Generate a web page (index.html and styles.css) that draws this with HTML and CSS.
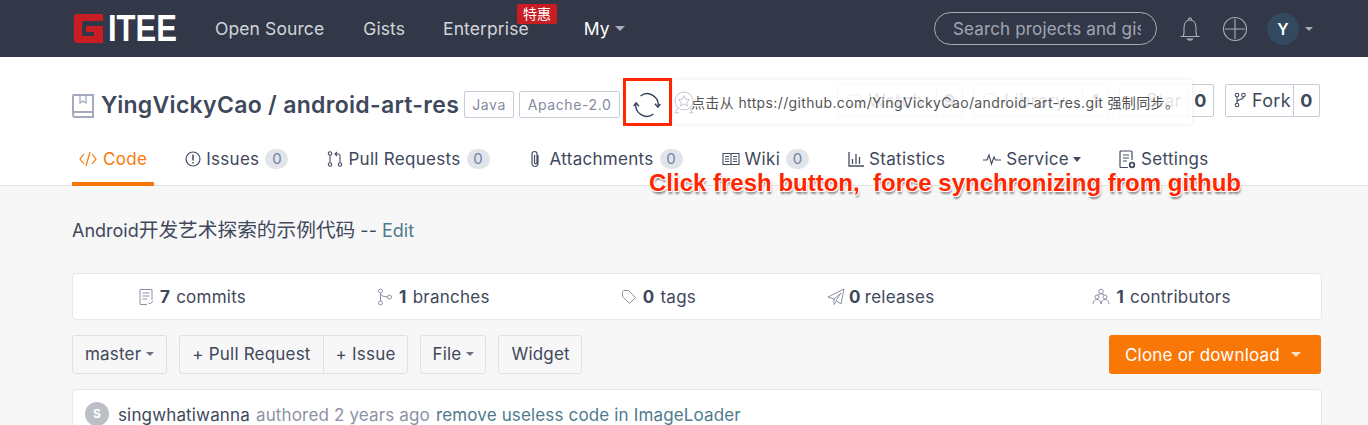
FILE: index.html
```html
<!DOCTYPE html>
<html lang="en">
<head>
<meta charset="utf-8">
<title>YingVickyCao / android-art-res</title>
<link rel="stylesheet" href="styles.css">
</head>
<body>
<header class="topbar">
  <a class="logo">
    <svg class="logo-g" viewBox="0 0 29 29" width="29" height="29"><path d="M3 0H29V7H10Q8 7 8 9V20Q8 22 10 22H20V18H12V12H29V29H3Q0 29 0 26V3Q0 0 3 0Z" fill="#c71d23"/></svg>
    <span class="logo-text">ITEE</span>
  </a>
  <nav class="mainnav">
    <a class="nav-open">Open Source</a>
    <a class="nav-gists">Gists</a>
    <a class="nav-ent">Enterprise<span class="hot">特惠</span></a>
    <a class="nav-my">My<i class="caret caret-grey"></i></a>
  </nav>
  <div class="top-right">
    <div class="search"><span class="search-text">Search projects and gis</span></div>
    <svg class="bell" viewBox="0 0 20 26" width="20" height="26" fill="none" stroke="#a9aebb" stroke-width="1.100"><path d="M0.500 20.500H19.500M3 20.500C4.500 18 4 14 4 11.500C4 7 6.500 4 10 4C13.500 4 16 7 16 11.500C16 14 15.500 18 17 20.500M8.500 4C8.500 1 11.500 1 11.500 4"/><path d="M7.500 23H12.500Q10 25.500 7.500 23Z"/></svg>
    <svg class="plus" viewBox="0 0 26 26" width="26" height="26" fill="none" stroke="#a9aebb" stroke-width="1.100"><circle cx="13" cy="13" r="11.500"/><path d="M13 3V23M3 13H23"/></svg>
    <span class="me">Y</span>
    <i class="caret caret-grey caret-small"></i>
  </div>
</header>

<section class="repo-head">
  <div class="title-row">
    <svg class="book" viewBox="0 0 22 24" width="22" height="24" fill="none" stroke="#a4a9bf" stroke-width="2"><path d="M1 20V2Q1 1 2 1H21V23H3Q1 23 1 20ZM1 20Q1 18 3 18H21"/><path d="M8 1V9L11 7L14 9V1" stroke-width="1.300"/></svg>
    <h1 class="repo-name">YingVickyCao / android-art-res</h1>
    <span class="tag tag-java">Java</span>
    <span class="tag tag-lic">Apache-2.0</span>
    <svg class="sync" viewBox="0 0 28 28" width="28" height="28" fill="none" stroke="#38405a" stroke-width="1.400"><path d="M7.500 5A11 11 0 0 1 25 15.500"/><path d="M20.500 23A11 11 0 0 1 3 12.500"/><path d="M22 12.800L24.900 16.200L27.300 13"/><path d="M0.700 15L3.100 11.800L6 15.200"/></svg>
    <div class="actions">
      <div class="act act-watch"><span class="act-l"><svg viewBox="0 0 16 16" width="16" height="16" fill="none" stroke="#8c92a4"><rect x="1" y="3" width="14" height="10" rx="1"/></svg>Watch</span><b class="act-n">9</b></div>
      <div class="act act-star"><span class="act-l"><svg viewBox="0 0 16 16" width="16" height="16" fill="none" stroke="#8c92a4"><circle cx="8" cy="8" r="6.500"/></svg>Library</span><b class="act-n">1</b></div>
      <div class="act act-unstar"><span class="act-l">Star</span><b class="act-n">0</b></div>
      <div class="act act-fork"><span class="act-l"><svg viewBox="0 0 12 16" width="12" height="16" fill="none" stroke="#454c63" stroke-width="1.100"><circle cx="3" cy="3" r="1.800"/><circle cx="9.500" cy="3" r="1.800"/><circle cx="3" cy="13" r="1.800"/><path d="M3 5V11M9.500 5C9.500 8 3 7 3 10"/></svg>Fork</span><b class="act-n">0</b></div>
    </div>
  </div>
  <nav class="tabs">
    <a class="tab tab-active"><svg viewBox="0 0 18 16" width="18" height="16" fill="none" stroke="#f97706" stroke-width="1.200"><path d="M5 3L1 8L5 13M13 3L17 8L13 13M11 1L7 15"/></svg>Code</a>
    <a class="tab"><svg viewBox="0 0 16 16" width="16" height="16" fill="none" stroke="#454c63" stroke-width="1.200"><circle cx="8" cy="8" r="7"/><path d="M8 3.500V9.500M8 11V12.500" stroke-width="1.500"/></svg>Issues<span class="count">0</span></a>
    <a class="tab"><svg viewBox="0 0 16 16" width="16" height="16" fill="none" stroke="#454c63" stroke-width="1.100"><circle cx="3" cy="2.500" r="1.700"/><circle cx="3" cy="13.500" r="1.700"/><circle cx="13" cy="13.500" r="1.700"/><path d="M3 4.500V11.500M13 11.500V4.500Q13 3 11 3H8M10 1L8 3L10 5"/></svg>Pull Requests<span class="count">0</span></a>
    <a class="tab"><svg viewBox="0 0 16 18" width="16" height="18" fill="none" stroke="#454c63" stroke-width="1.200"><path d="M11 5V13Q11 16.500 8 16.500Q5 16.500 5 13V4Q5 1.500 7.500 1.500Q10 1.500 10 4V12.500Q10 13.800 8.500 13.800Q7.500 13.800 7.500 12.500V5" transform="translate(-2 0)"/></svg>Attachments<span class="count">0</span></a>
    <a class="tab"><svg viewBox="0 0 18 14" width="18" height="14" fill="none" stroke="#454c63" stroke-width="1.100"><path d="M1 1.500H8Q9 1.500 9 3Q9 1.500 10 1.500H17V12.500H1ZM9 3V12.500M3 4.500H7M3 7H7M3 9.500H7M11 4.500H15M11 7H15M11 9.500H15"/></svg>Wiki<span class="count">0</span></a>
    <a class="tab"><svg viewBox="0 0 16 16" width="16" height="16" fill="none" stroke="#454c63" stroke-width="1.300"><path d="M1 1V15H16M4.500 8V13M8 3V13M11.500 6V13"/></svg>Statistics</a>
    <a class="tab"><svg viewBox="0 0 18 14" width="18" height="14" fill="none" stroke="#454c63" stroke-width="1.200"><path d="M0 8H4L6 3L8.500 12L11 5L12.500 8H18"/></svg>Service<i class="caret caret-dark"></i></a>
    <a class="tab"><svg viewBox="0 0 17 19" width="17" height="19" fill="none" stroke="#454c63" stroke-width="1.200"><path d="M9 17.500H2Q1 17.500 1 16.500V2Q1 1 2 1H12Q13 1 13 2V10M4 5H10M4 8H10M4 11H8"/><circle cx="13" cy="15" r="2.300" stroke-width="1.800"/></svg>Settings</a>
  </nav>
</section>

<main class="body">
  <p class="desc">Android<span class="cjk">开发艺术探索的示例代码</span> -- <a class="link">Edit</a></p>
  <div class="stats">
    <span class="stat"><svg viewBox="0 0 16 18" width="16" height="18" fill="none" stroke="#8c92a4"><path d="M9 16.500H2V1.500H14V12M4.500 5H11.500M4.500 8H11.500M4.500 11H9M10.500 14.500L12 16L15 13"/></svg><b>7</b> commits</span>
    <span class="stat"><svg viewBox="0 0 16 18" width="16" height="18" fill="none" stroke="#8c92a4"><circle cx="3.500" cy="3" r="2"/><circle cx="3.500" cy="15" r="2"/><circle cx="12.500" cy="9" r="2"/><path d="M3.500 5V13M3.500 6Q5 9 10.500 9"/></svg><b>1</b> branches</span>
    <span class="stat"><svg viewBox="0 0 16 16" width="16" height="16" fill="none" stroke="#8c92a4"><path d="M1.500 2.500V7.500L8.500 14.500L14.500 8.500L7.500 1.500H2.500ZM4.500 4.500V4.600"/></svg><b>0</b> tags</span>
    <span class="stat stat-rel"><svg viewBox="0 0 18 18" width="18" height="18" fill="none" stroke="#8c92a4"><path d="M17 1L1 9L7 11L14 5L9 12.500L14 16ZM7 11V16.500L9.500 13.500"/></svg><b>0</b> releases</span>
    <span class="stat stat-last"><svg viewBox="0 0 18 18" width="18" height="18" fill="none" stroke="#8c92a4"><circle cx="9" cy="3.500" r="2.300"/><circle cx="5" cy="9" r="2"/><circle cx="13" cy="9" r="2"/><path d="M1 16Q1.500 11.500 5 11.500Q8.500 11.500 9 16M9 16Q9.500 11.500 13 11.500Q16.500 11.500 17 16M6 6.500Q9 5 12 6.500"/></svg><b>1</b> contributors</span>
  </div>
  <div class="toolbar">
    <a class="btn">master<i class="caret caret-mid"></i></a>
    <div class="btn-group"><a class="btn btn-pr">+ Pull Request</a><a class="btn btn-issue">+ Issue</a></div>
    <a class="btn btn-file">File<i class="caret caret-mid"></i></a>
    <a class="btn btn-widget">Widget</a>
    <a class="clone">Clone or download<i class="caret caret-white"></i></a>
  </div>
  <div class="commit">
    <span class="avatar">S</span>
    <span class="author">singwhatiwanna</span>
    <span class="muted">authored 2 years ago</span>
    <a class="link">remove useless code in ImageLoader</a>
  </div>
</main>

<div class="sync-mark"></div>
<div class="tip">
  <svg class="medal" viewBox="0 0 22 24" width="22" height="24" fill="none" stroke="#c4c8d2"><circle cx="11" cy="10" r="9"/><path d="M11 4.500L12.700 8.200L16.500 8.600L13.700 11.200L14.500 15L11 13L7.500 15L8.300 11.200L5.500 8.600L9.300 8.200Z"/><path d="M5 17L2 22L6 21.500M17 17L20 22L16 21.500"/></svg>
  <span>点击从 https://github.com/YingVickyCao/android-art-res.git 强制同步。</span>
</div>
<div class="note">Click fresh button,&nbsp; force synchronizing from github</div>
</body>
</html>
```
FILE: styles.css
```css
* { box-sizing: border-box; }
html, body { margin: 0; height: 425px; overflow: hidden; }
body {
  position: relative;
  font-family: Inter, "Noto Sans CJK SC", sans-serif;
  color: #40485b;
  background: #f7f7f7;
  font-size: 17px;
  letter-spacing: .3px;
}
a { color: inherit; text-decoration: none; }
svg { flex: none; display: block; }

/* top bar */
.topbar {
  height: 57px;
  background: #323847;
  display: flex;
  align-items: center;
  padding-left: 74px;
  color: #d2d5db;
  font-size: 17.500px;
  letter-spacing: .1px;
}
.logo { display: flex; align-items: center; width: 141px; }
.logo-text {
  font-family: "Liberation Sans", sans-serif;
  font-weight: 700;
  font-size: 36px;
  line-height: 30px;
  letter-spacing: 0;
  color: #fff;
  margin-left: 5px;
  transform: scaleX(.86);
  transform-origin: left center;
}
.mainnav { display: flex; align-items: center; }
.mainnav a { position: relative; white-space: nowrap; }
.nav-gists { margin-left: 39px; }
.nav-ent { margin-left: 38px; }
.nav-my { margin-left: 55px; color: #fff; display: flex; align-items: center; }
.hot {
  position: absolute;
  left: 74px;
  top: -14px;
  width: 40px;
  height: 20px;
  background: #c71d23;
  border-radius: 2px;
  color: #fff;
  font-size: 14px;
  line-height: 20px;
  text-align: center;
}
.caret {
  display: inline-block;
  width: 0;
  height: 0;
  border-style: solid;
  border-width: 5px 5px 0;
  border-color: currentColor transparent transparent;
  margin-left: 5px;
}
.caret-grey { color: #a9aebb; }
.caret-small { border-width: 4.500px 4.500px 0; margin-left: 6px; }
.caret-dark { color: #40485b; border-width: 5px 4.500px 0; margin-left: -1px; }
.caret-mid { color: #6b7285; border-width: 4px 4px 0; }
.caret-white { color: #fff; opacity: .75; margin-left: 11px; }
.top-right { margin-left: auto; display: flex; align-items: center; padding-right: 55px; }
.search {
  width: 223px;
  height: 33px;
  border: 1px solid #a9aebb;
  border-radius: 17px;
  padding: 0 15px 0 18px;
  font-size: 17px;
  letter-spacing: .15px;
  line-height: 32px;
  color: #a2a7b4;
}
.search-text { display: block; overflow: hidden; white-space: nowrap; }
.bell { margin-left: 23px; }
.plus { margin-left: 22px; }
.me {
  width: 32px;
  height: 32px;
  border-radius: 50%;
  background: #33495f;
  color: #fff;
  font-size: 16px;
  font-weight: 600;
  line-height: 32px;
  text-align: center;
  margin-left: 19px;
}

/* repo head */
.repo-head { background: #fff; height: 129px; border-bottom: 1px solid #e3e3e3; padding: 0 48px 0 72px; }
.title-row { display: flex; align-items: center; height: 69px; padding-top: 26px; }
.book { margin-right: 7px; margin-top: 2px; }
.repo-name { margin: 0; font-size: 23px; font-weight: 600; color: #40485b; white-space: nowrap; }
.tag {
  height: 27px;
  border: 1px solid #c8cbd8;
  border-radius: 2px;
  color: #858b9e;
  font-size: 14px;
  letter-spacing: .6px;
  line-height: 25px;
  text-align: center;
  margin-top: -1px;
}
.tag-java { width: 50px; margin-left: 5px; }
.tag-lic { width: 101px; margin-left: 5px; }
.sync { margin-left: 13px; margin-top: 1px; }
.actions { margin-left: auto; display: flex; gap: 10px; margin-top: -9px; }
.act {
  height: 33px;
  display: flex;
  border: 1px solid #c8cbd8;
  border-radius: 2px;
  align-items: center;
  background: #fff;
  font-size: 18px;
}
.act-l { display: flex; align-items: center; gap: 6px; padding-left: 8px; flex: 1; white-space: nowrap; }
.act-n { width: 26px; height: 100%; border-left: 1px solid #c8cbd8; text-align: center; line-height: 31px; font-weight: 700; }
.act-watch { width: 126px; }
.act-star { width: 136px; }
.act-unstar { width: 95px; }
.act-unstar .act-l { padding-left: 26px; }
.act-fork { width: 95px; margin-left: 1px; }
.tabs { display: flex; height: 59px; }
.tab {
  display: flex;
  align-items: center;
  gap: 5px;
  height: 60px;
  padding-top: 6px;
  margin-right: 38px;
  white-space: nowrap;
}
.tab-active {
  color: #f97706;
  border-bottom: 4px solid #f97706;
  gap: 6px;
  padding: 10px 7px 0;
  margin-right: 31px;
}
.count {
  width: 23px;
  height: 20px;
  border-radius: 10px;
  background: #e2e4e9;
  color: #6f83a8;
  font-size: 15px;
  letter-spacing: 0;
  line-height: 20px;
  text-align: center;
  margin-left: 1px;
  margin-right: 1px;
}

/* body */
.body { padding: 0 46px 0 72px; }
.desc { margin: 0; padding-top: 31px; height: 87px; font-size: 18px; line-height: 26px; letter-spacing: 0; }
.cjk { font-size: 19.700px; }
.link { color: #4f7a8e; }
.stats {
  height: 47px;
  background: #fff;
  border: 1px solid #e4e7ec;
  border-radius: 4px;
  display: flex;
  align-items: center;
  gap: 131px;
  padding-left: 65px;
  white-space: nowrap;
  letter-spacing: .25px;
}
.stat { display: flex; align-items: center; gap: 6px; }
.stat b { font-weight: 700; }
.stat-rel { gap: 4px; }
.stat-last { margin-left: 27px; }
.toolbar { display: flex; margin-top: 15px; height: 39px; gap: 12px; letter-spacing: .2px; }
.btn {
  display: flex;
  align-items: center;
  padding: 0 12px 1px;
  height: 39px;
  border: 1px solid #dde1e7;
  border-radius: 3px;
  background: #f7f7f7;
}
.btn-group { display: flex; }
.btn-pr { border-radius: 3px 0 0 3px; border-right: 0; }
.btn-issue { border-radius: 0 3px 3px 0; padding-right: 11px; }
.btn-file { padding-right: 11px; }
.btn-widget { padding-right: 11px; }
.clone {
  margin-left: auto;
  margin-right: 1px;
  width: 212px;
  height: 39px;
  background: #f97706;
  color: #fff;
  border-radius: 3px;
  display: flex;
  align-items: center;
  padding-left: 16px;
  white-space: nowrap;
}
.commit {
  margin-top: 15px;
  height: 120px;
  background: #fff;
  border: 1px solid #e4e7ec;
  border-radius: 4px;
  padding: 12px 12px;
  display: flex;
  gap: 6px;
  white-space: nowrap;
  line-height: 26px;
  letter-spacing: .15px;
}
.avatar {
  width: 24px;
  height: 24px;
  border-radius: 50%;
  background: #bcbfc6;
  color: #fff;
  font-size: 12px;
  font-weight: 700;
  line-height: 24px;
  text-align: center;
  margin-right: 3px;
}
.muted { color: #8c92a4; }

/* overlays */
.sync-mark {
  position: absolute;
  left: 623px;
  top: 78px;
  width: 49px;
  height: 48px;
  border: 3px solid #ff2600;
}
.tip {
  position: absolute;
  left: 673px;
  top: 80px;
  width: 519px;
  height: 44px;
  background: rgba(255,255,255,.86);
  box-shadow: 0 0 4px rgba(0,0,0,.1);
  display: flex;
  align-items: center;
  font-size: 14px;
  letter-spacing: .37px;
  color: #555;
  white-space: nowrap;
}
.medal { position: absolute; left: 0; top: 11px; }
.tip span { margin-left: 18px; }
.note {
  position: absolute;
  left: 649px;
  top: 169px;
  font-family: "Liberation Sans", Arial, sans-serif;
  font-weight: 700;
  font-size: 24px;
  letter-spacing: 0;
  line-height: 28px;
  color: #ff2600;
  white-space: nowrap;
  text-shadow: -1px -1px 0 #fff, 1px -1px 0 #fff, -1px 1px 0 #fff, 1px 1px 0 #fff, 1px 3px 2px rgba(0,0,0,.45);
}
```
